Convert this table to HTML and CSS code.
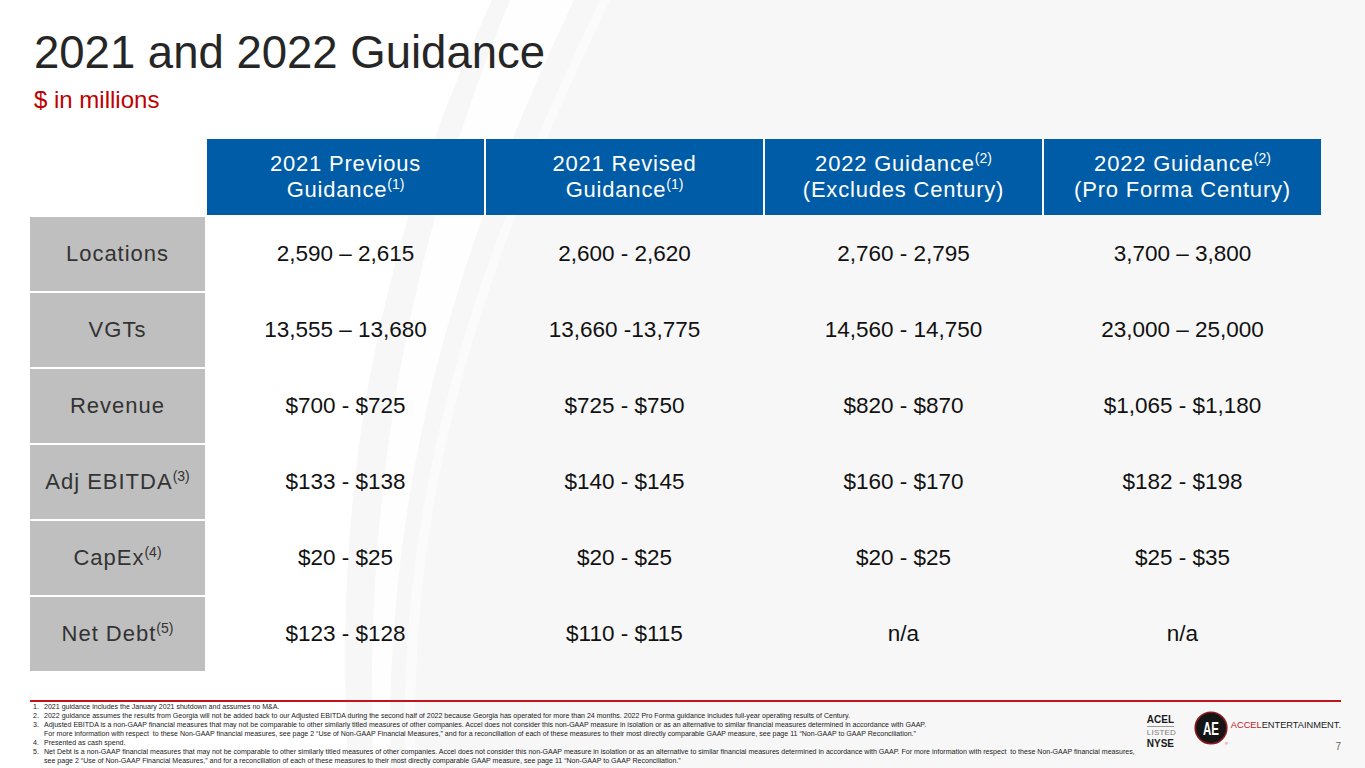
FILE: index.html
```html
<!DOCTYPE html>
<html lang="en">
<head>
<meta charset="utf-8">
<title>2021 and 2022 Guidance</title>
<link rel="stylesheet" href="styles.css">
</head>
<body>
<div class="slide">
  <svg class="bg" width="1365" height="768" viewBox="0 0 1365 768" aria-hidden="true">
    <path d="M0 0 H492 C 400 200 330 430 348 768 H0 Z" fill="#ffffff"/>
    <path d="M510 0 H574 C 480 200 385 440 390 768 H373 C 362 440 428 200 510 0 Z" fill="#ffffff" opacity="0.85"/>
    <path d="M600 0 H610 C 500 230 405 470 416 768 H405 C 396 470 490 230 600 0 Z" fill="#fbfbfb"/>
  </svg>
  <div class="content">
    <h1 class="title">2021 and 2022 Guidance</h1>
    <p class="subtitle">$ in millions</p>

    <div class="table">
      <div class="corner"></div>
      <div class="hcell"><span>2021 Previous<br>Guidance<sup>(1)</sup></span></div>
      <div class="hcell"><span>2021 Revised<br>Guidance<sup>(1)</sup></span></div>
      <div class="hcell"><span>2022 Guidance<sup>(2)</sup><br>(Excludes Century)</span></div>
      <div class="hcell"><span>2022 Guidance<sup>(2)</sup><br>(Pro Forma Century)</span></div>

      <div class="label"><span>Locations</span></div>
      <div class="cell">2,590 – 2,615</div>
      <div class="cell">2,600 - 2,620</div>
      <div class="cell">2,760 - 2,795</div>
      <div class="cell">3,700 – 3,800</div>

      <div class="label"><span>VGTs</span></div>
      <div class="cell">13,555 – 13,680</div>
      <div class="cell">13,660 -13,775</div>
      <div class="cell">14,560 - 14,750</div>
      <div class="cell">23,000 – 25,000</div>

      <div class="label"><span>Revenue</span></div>
      <div class="cell">$700 - $725</div>
      <div class="cell">$725 - $750</div>
      <div class="cell">$820 - $870</div>
      <div class="cell">$1,065 - $1,180</div>

      <div class="label"><span>Adj EBITDA<sup>(3)</sup></span></div>
      <div class="cell">$133 - $138</div>
      <div class="cell">$140 - $145</div>
      <div class="cell">$160 - $170</div>
      <div class="cell">$182 - $198</div>

      <div class="label"><span>CapEx<sup>(4)</sup></span></div>
      <div class="cell">$20 - $25</div>
      <div class="cell">$20 - $25</div>
      <div class="cell">$20 - $25</div>
      <div class="cell">$25 - $35</div>

      <div class="label"><span>Net Debt<sup>(5)</sup></span></div>
      <div class="cell">$123 - $128</div>
      <div class="cell">$110 - $115</div>
      <div class="cell">n/a</div>
      <div class="cell">n/a</div>
    </div>

    <footer class="footer">
      <div class="notes">
        <div class="note"><span class="num">1.</span><span>2021 guidance includes the January 2021 shutdown and assumes no M&amp;A.</span></div>
        <div class="note"><span class="num">2.</span><span>2022 guidance assumes the results from Georgia will not be added back to our Adjusted EBITDA during the second half of 2022 because Georgia has operated for more than 24 months. 2022 Pro Forma guidance includes full-year operating results of Century.</span></div>
        <div class="note"><span class="num">3.</span><span>Adjusted EBITDA is a non-GAAP financial measures that may not be comparable to other similarly titled measures of other companies. Accel does not consider this non-GAAP measure in isolation or as an alternative to similar financial measures determined in accordance with GAAP.<br>For more information with respect&nbsp; to these Non-GAAP financial measures, see page 2 “Use of Non-GAAP Financial Measures,” and for a reconciliation of each of these measures to their most directly comparable GAAP measure, see page 11 “Non-GAAP to GAAP Reconciliation.”</span></div>
        <div class="note"><span class="num">4.</span><span>Presented as cash spend.</span></div>
        <div class="note"><span class="num">5.</span><span>Net Debt is a non-GAAP financial measures that may not be comparable to other similarly titled measures of other companies. Accel does not consider this non-GAAP measure in isolation or as an alternative to similar financial measures determined in accordance with GAAP. For more information with respect&nbsp; to these Non-GAAP financial measures,<br>see page 2 “Use of Non-GAAP Financial Measures,” and for a reconciliation of each of these measures to their most directly comparable GAAP measure, see page 11 “Non-GAAP to GAAP Reconciliation.”</span></div>
      </div>
      <div class="brand">
        <div class="listed">
          <div class="l-acel">ACEL</div>
          <div class="l-listed">LISTED</div>
          <div class="l-nyse">NYSE</div>
        </div>
        <svg class="ae" width="36" height="36" viewBox="0 0 36 36" aria-hidden="true">
          <circle cx="17" cy="17" r="15.8" fill="#151515" stroke="#8a1a1f" stroke-width="1.6"/>
          <text x="17" y="24" text-anchor="middle" font-family="Liberation Sans, Arial, sans-serif" font-weight="bold" font-size="19" fill="#ffffff" textLength="16" lengthAdjust="spacingAndGlyphs">AE</text>
          <text x="31" y="34" font-family="Liberation Sans, Arial, sans-serif" font-size="4" fill="#c0151d">®</text>
        </svg>
        <div class="brand-col">
          <div class="brand-name"><span class="red">ACCEL</span>ENTERTAINMENT.</div>
          <div class="page">7</div>
        </div>
      </div>
    </footer>
  </div>
</div>
</body>
</html>
```

FILE: styles.css
```css
body {
  margin: 0;
  font-family: "Liberation Sans", Arial, sans-serif;
}

.slide {
  position: relative;
  width: 1365px;
  height: 768px;
  overflow: hidden;
  background: #f7f7f7;
}

.bg {
  position: absolute;
  left: 0;
  top: 0;
}

.content {
  position: relative;
  display: flex;
  flex-direction: column;
  height: 100%;
}

.title {
  margin: 30px 0 0 34px;
  font-size: 45.5px;
  line-height: 45px;
  font-weight: normal;
  color: #262626;
}

.subtitle {
  margin: 13px 0 0 34px;
  font-size: 24px;
  line-height: 24px;
  color: #c00000;
}

.table {
  margin: 27px 0 0 30px;
  display: grid;
  grid-template-columns: 175px repeat(4, 277px);
  grid-template-rows: 76px repeat(6, 74px);
  gap: 2px;
}

.hcell {
  background: #005ca6;
  color: #ffffff;
  font-size: 22px;
  line-height: 26px;
  letter-spacing: 0.8px;
  display: flex;
  align-items: center;
  justify-content: center;
  text-align: center;
}

.label {
  background: #bfbfbf;
  color: #333333;
  font-size: 22px;
  letter-spacing: 1px;
  display: flex;
  align-items: center;
  justify-content: center;
}

.cell {
  color: #111111;
  font-size: 22.5px;
  display: flex;
  align-items: center;
  justify-content: center;
}

sup {
  font-size: 14px;
  line-height: 0;
  vertical-align: 8px;
  letter-spacing: 0;
}

.footer {
  margin: 29px 0 0 30px;
  width: 1311px;
  border-top: 2px solid #c0151d;
  display: flex;
}

.notes {
  flex: 1;
  padding-left: 3px;
  font-size: 7.05px;
  line-height: 9px;
  color: #222222;
  white-space: nowrap;
}

.note {
  display: flex;
}

.num {
  flex: none;
  width: 11px;
}

.brand {
  flex: none;
  display: flex;
  align-items: flex-start;
}

.listed {
  width: 27px;
  margin-top: 13px;
  text-align: center;
}

.l-acel {
  font-size: 10px;
  line-height: 10px;
  font-weight: bold;
  color: #1a1a1a;
  padding-bottom: 1px;
  border-bottom: 1px solid #9a9a9a;
}

.l-listed {
  margin-top: 1px;
  font-size: 8px;
  line-height: 9px;
  color: #7a7a7a;
  letter-spacing: 0.2px;
}

.l-nyse {
  margin-top: 2px;
  font-size: 10px;
  line-height: 10px;
  font-weight: bold;
  color: #1a1a1a;
}

.ae {
  margin: 9px 0 0 20px;
  display: block;
}

.brand-col {
  margin-left: 1px;
  display: flex;
  flex-direction: column;
  align-items: flex-end;
}

.brand-name {
  margin-top: 18px;
  font-size: 9.25px;
  line-height: 10px;
  color: #1a1a1a;
}

.red {
  color: #c0151d;
}

.page {
  margin-top: 12px;
  font-size: 10px;
  line-height: 10px;
  color: #666666;
}
```
